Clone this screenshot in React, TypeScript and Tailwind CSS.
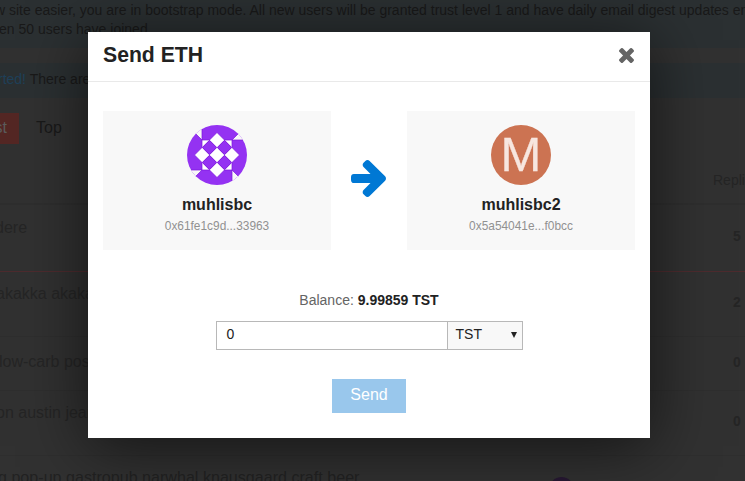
import React from "react";

const rows = [
  { title: "dere", replies: "5", height: "h-[67px]", border: "border-[#4d2b2e]", pad: "pt-[13px]", rpad: "pt-[21px]", shift: "-ml-[5px]" },
  { title: "akakka akakaka", replies: "2", height: "h-[65px]", border: "border-[#2e2e2e]", pad: "pt-[12px]", rpad: "pt-[20px]", shift: "-ml-[4px]" },
  { title: "slow-carb post-ironic", replies: "0", height: "h-[54px]", border: "border-[#2e2e2e]", pad: "pt-[15px]", rpad: "pt-[15px]", shift: "-ml-[9px]" },
  { title: "on austin jean shorts", replies: "0", height: "h-[65px]", border: "border-[#2e2e2e]", pad: "pt-[12px]", rpad: "pt-[20px]", shift: "-ml-[4px]" },
];

function Page() {
  return (
    <div className="flex h-[481px] w-[745px] flex-col overflow-hidden bg-[#313131] text-[#191919]">
      <div className="h-[48px] shrink-0 overflow-hidden bg-[#2b3032] pt-px text-[14px] leading-[19px] whitespace-nowrap">
        <p className="-ml-[5px]">w site easier, you are in bootstrap mode. All new users will be granted trust level 1 and have daily email digest updates enabled</p>
        <p className="-ml-[1px]">en 50 users have joined.</p>
      </div>
      <div className="mt-[15px] h-[35px] shrink-0 overflow-hidden bg-[#2b3032] pt-[7px] text-[14px] leading-[19px] whitespace-nowrap">
        <p className="-ml-[2px]">
          <span className="text-[#1f4059]">rted!</span> There are
        </p>
      </div>
      <div className="mt-[15px] flex h-[31px] shrink-0 items-center text-[16px]">
        <div className="flex h-full w-[19px] items-center justify-end bg-[#542724] pr-[12px] pb-[2px] text-[#5c5c5c]">st</div>
        <div className="ml-[17px] pb-[2px]">Top</div>
      </div>
      <div className="flex h-[61px] shrink-0 justify-end overflow-hidden border-b-[2px] border-[#2e2e2e] pt-[26px] text-[14px] leading-[20px] text-[#252525]">
        <div className="w-[32px] whitespace-nowrap">Replies</div>
      </div>
      {rows.map((r) => (
        <div key={r.title} className={`flex shrink-0 justify-between border-b text-[#252525] ${r.height} ${r.border}`}>
          <div className={`text-[16px] leading-[20px] whitespace-nowrap ${r.pad} ${r.shift}`}>{r.title}</div>
          <div className={`w-[12px] text-[14px] leading-[20px] font-bold ${r.rpad}`}>{r.replies}</div>
        </div>
      ))}
      <div className="flex h-[25px] shrink-0 overflow-hidden text-[#222]">
        <div className="-ml-[2px] w-[551px] pt-[11px] text-[16.1px] leading-[20px] whitespace-nowrap">g pop-up gastropub narwhal knausgaard craft beer</div>
        <div className="mt-[21px] size-[25px] shrink-0 rounded-full bg-[#271833]" />
      </div>
    </div>
  );
}

function Identicon() {
  return (
    <svg className="size-[60px]" viewBox="0 0 60 60">
      <defs>
        <clipPath id="round">
          <circle cx="30" cy="30" r="30" />
        </clipPath>
      </defs>
      <g clipPath="url(#round)">
        <rect width="60" height="60" fill="#9432f2" />
        {[0, 90, 180, 270].map((a) => (
          <g key={a} transform={`rotate(${a} 30 30)`} fill="#fff" stroke="#7d16dc" strokeWidth=".7">
            <path d="M0 0 15 15V0Z" fill="#f8f8f8" />
            <path d="M22.5 15 30 7.5 37.5 15" />
          </g>
        ))}
        <rect x="15" y="15" width="30" height="30" fill="#fff" />
        <g fill="#9432f2" stroke="#7d16dc" strokeWidth="1">
          <path d="M22.5 15.3 29.7 22.5 22.5 29.7 15.3 22.5Z" />
          <path d="M37.5 15.3 44.7 22.5 37.5 29.7 30.3 22.5Z" />
          <path d="M22.5 30.3 29.7 37.5 22.5 44.7 15.3 37.5Z" />
          <path d="M37.5 30.3 44.7 37.5 37.5 44.7 30.3 37.5Z" />
        </g>
        <path d="M15 15h7.5M37.5 15H45v7.5M45 37.5V45h-7.5M22.5 45H15v-7.5M15 22.5V15" fill="none" stroke="#7d16dc" strokeWidth=".7" />
      </g>
    </svg>
  );
}

function Account({ name, address, children }: { name: string; address: string; children: React.ReactNode }) {
  return (
    <div className="flex h-[139px] w-[228px] flex-col items-center bg-[#f8f8f8] pt-[14px]">
      {children}
      <div className="mt-[9px] text-[16px] leading-[22px] font-bold text-[#222]">{name}</div>
      <div className="mt-[2px] text-[11.9px] leading-[16px] text-[#919191]">{address}</div>
    </div>
  );
}

function Modal() {
  return (
    <div className="flex h-[406px] w-[562px] flex-col bg-white shadow-[0_8px_60px_rgba(0,0,0,0.6)]">
      <div className="flex h-[50px] shrink-0 items-center justify-between border-b border-[#e9e9e9] pr-[16px] pl-[15px]">
        <h3 className="pb-[4px] text-[21.2px] leading-[28px] font-bold text-[#222]">Send ETH</h3>
        <button aria-label="Close" className="pb-[3px]">
          <svg className="size-[15px]" viewBox="110 366 1188 1188" fill="#646464">
            <path d="M1298 1322q0 40-28 68l-136 136q-28 28-68 28t-68-28l-294-294-294 294q-28 28-68 28t-68-28l-136-136q-28-28-28-68t28-68l294-294-294-294q-28-28-28-68t28-68l136-136q28-28 68-28t68 28l294 294 294-294q28-28 68-28t68 28l136 136q28 28 28 68t-28 68l-294 294 294 294q28 28 28 68z" />
          </svg>
        </button>
      </div>
      <div className="mt-[29px] flex items-center justify-between px-[15px]">
        <Account name="muhlisbc" address="0x61fe1c9d...33963">
          <Identicon />
        </Account>
        <svg className="mr-[2px] mb-[4px] h-[37px] w-[35px]" viewBox="0 181 1472 1558" fill="#0078d4">
          <path d="M1472 960q0 54-37 91l-651 651q-39 37-91 37-51 0-90-37l-75-75q-38-38-38-91t38-91l293-293H117q-52 0-84.500-37.500T0 1024V896q0-53 32.500-90.500T117 768h704L528 474q-38-36-38-90t38-90l75-75q38-38 90-38 53 0 91 38l651 651q37 35 37 90z" />
        </svg>
        <Account name="muhlisbc2" address="0x5a54041e...f0bcc">
          <div className="flex size-[60px] items-center justify-center rounded-full bg-[#cc7352] pb-[2px] text-[49px] leading-[58px] text-[#f7e6df] [-webkit-text-stroke:0.3px_#f7e6df]">M</div>
        </Account>
      </div>
      <div className="mt-[40px] text-center text-[14px] leading-[20px] text-[#646464]">
        Balance: <b className="text-[#222]">9.99859 TST</b>
      </div>
      <div className="mt-[11px] ml-[128px] flex h-[29px] w-[307px] border border-[#b8b8b8] text-[14px] leading-[20px] text-[#222]">
        <div className="w-[231px] border-r border-[#b8b8b8] pt-[2px] pl-[9.5px]">0</div>
        <div className="flex flex-1 justify-between bg-[#f8f8f8] pt-[2px] pr-[5px] pl-[7.5px]">
          <span>TST</span>
          <svg className="mt-[8px] h-[6px] w-[6px]" viewBox="0 0 6 6" fill="#222">
            <path d="M0 0h6L3 6z" />
          </svg>
        </div>
      </div>
      <button className="mt-[29px] ml-[244px] h-[34px] w-[74px] bg-[#99c7ec] pb-[2px] text-[16px] leading-[20px] text-white">Send</button>
    </div>
  );
}

export default function App() {
  return (
    <div className="relative h-[481px] w-[745px] overflow-hidden font-['Liberation_Sans',Arial,sans-serif]">
      <Page />
      <div className="absolute inset-0 flex items-start pt-[32px] pl-[88px]">
        <Modal />
      </div>
    </div>
  );
}
